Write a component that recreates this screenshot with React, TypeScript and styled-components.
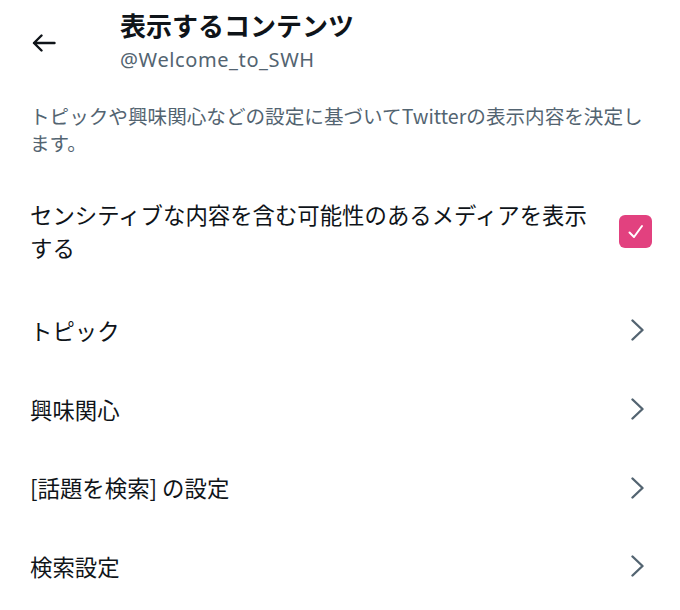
import styled, { createGlobalStyle } from "styled-components";

const GlobalStyle = createGlobalStyle`
    body {
        margin: 0;
        background: #ffffff;
        font-family: "Noto Sans CJK JP", "Noto Sans", sans-serif;
        color: #0f1419;
    }
`;

const Page = styled.main`
    width: 680px;
    padding: 9px 0 0 30px;
    box-sizing: border-box;
`;

const Header = styled.header`
    display: flex;
    align-items: center;
`;

const BackButton = styled.button`
    width: 90px;
    height: 40px;
    padding: 0 0 0 2px;
    margin-top: 4px;
    border: none;
    background: none;
    display: flex;
    align-items: center;
    cursor: pointer;
`;

const TitleBlock = styled.div`
    display: flex;
    flex-direction: column;
    gap: 7px;
`;

const Title = styled.h1`
    margin: 0;
    font-size: 26px;
    line-height: 32px;
    font-weight: 700;
`;

const Handle = styled.span`
    font-family: "Noto Sans", "Noto Sans CJK JP", sans-serif;
    font-size: 20px;
    line-height: 24px;
    letter-spacing: 0.6px;
    color: #536471;
`;

const Description = styled.p`
    margin: 30px 0 0;
    width: 626px;
    font-size: 19.6px;
    line-height: 27px;
    color: #536471;
`;

const ToggleRow = styled.label`
    display: flex;
    align-items: center;
    gap: 24px;
    padding: 42px 28px 27px 0;
    cursor: pointer;
`;

const RowText = styled.span`
    flex: 1;
    font-size: 22.4px;
    line-height: 33px;
`;

const Checkbox = styled.span<{ $checked: boolean }>`
    flex: none;
    width: 33px;
    height: 33px;
    border-radius: 6px;
    background: ${(p) => (p.$checked ? "#e2417f" : "transparent")};
    border: ${(p) => (p.$checked ? "none" : "2px solid #536471")};
    display: flex;
    align-items: center;
    justify-content: center;
`;

const LinkRow = styled.a`
    height: 78.7px;
    display: flex;
    align-items: center;
    justify-content: space-between;
    padding-right: 36px;
    color: inherit;
    text-decoration: none;
    cursor: pointer;
`;

const ArrowLeft = () => (
    <svg width="24" height="18" viewBox="0 0 24 18" fill="none" stroke="#0f1419" strokeWidth="2.4" strokeLinecap="round" strokeLinejoin="round">
        <path d="M2 9h20.5M9.5 1.5L2 9l7.5 7.5" />
    </svg>
);

const Chevron = () => (
    <svg width="13" height="22" viewBox="0 0 13 22" fill="none" stroke="#536471" strokeWidth="2.4" strokeLinecap="round" strokeLinejoin="round">
        <path d="M1.5 1.5L11.5 11L1.5 20.5" />
    </svg>
);

const Check = () => (
    <svg width="33" height="33" viewBox="0 0 33 33" fill="none" stroke="#ffffff" strokeWidth="2" strokeLinecap="round" strokeLinejoin="round">
        <path d="M10.5 17.5l4.5 4.5 8-11" />
    </svg>
);

const links = ["トピック", "興味関心", "[話題を検索] の設定", "検索設定"];

function App() {
    return (
        <>
            <GlobalStyle />
            <Page>
                <Header>
                    <BackButton aria-label="戻る">
                        <ArrowLeft />
                    </BackButton>
                    <TitleBlock>
                        <Title>表示するコンテンツ</Title>
                        <Handle>@Welcome_to_SWH</Handle>
                    </TitleBlock>
                </Header>
                <Description>
                    トピックや興味関心などの設定に基づいてTwitterの表示内容を決定します。
                </Description>
                <ToggleRow>
                    <RowText>センシティブな内容を含む可能性のあるメディアを表示する</RowText>
                    <Checkbox $checked={true}>
                        <Check />
                    </Checkbox>
                </ToggleRow>
                {links.map((label) => (
                    <LinkRow key={label}>
                        <RowText>{label}</RowText>
                        <Chevron />
                    </LinkRow>
                ))}
            </Page>
        </>
    );
}

export default App;
